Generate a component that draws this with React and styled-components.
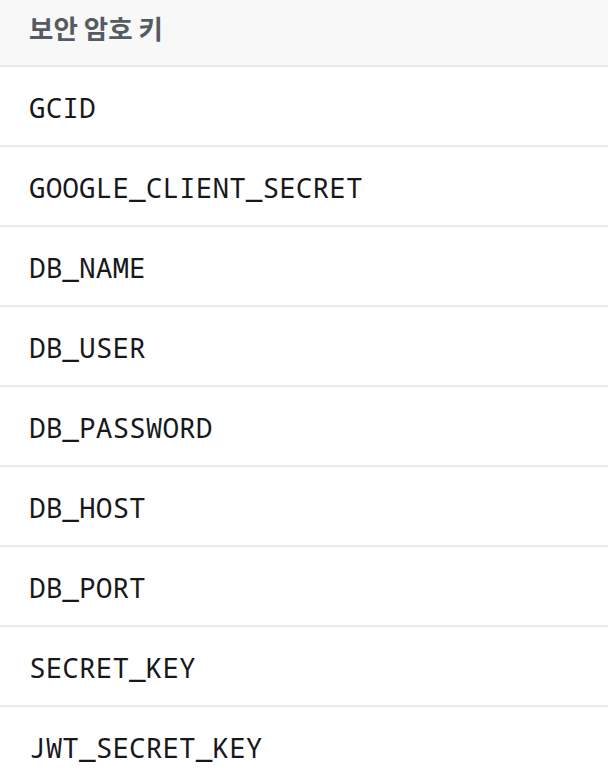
import React from "react";
import styled, { createGlobalStyle } from "styled-components";

const Global = createGlobalStyle`
  html, body { margin: 0; padding: 0; background: #ffffff; }
  body { font-family: "Noto Sans CJK KR", "Noto Sans", sans-serif; }
`;

const Table = styled.div`
  display: flex;
  flex-direction: column;
  width: 608px;
`;

const Header = styled.div`
  height: 67px;
  box-sizing: border-box;
  display: flex;
  align-items: center;
  padding: 0 0 11px 29px;
  background: #f8f8f8;
  border-bottom: 2px solid #e9e9e9;
  color: #555b62;
  font-family: "Noto Sans CJK KR", sans-serif;
  font-weight: 700;
  font-size: 26.5px;
`;

const Row = styled.div`
  height: 80px;
  box-sizing: border-box;
  display: flex;
  align-items: center;
  padding: 2px 0 0 29px;
  border-bottom: 2px solid #e9e9e9;
  color: #17181c;
  font-family: "Noto Sans Mono", "DejaVu Sans Mono", monospace;
  font-size: 27.8px;
`;

const keys = [
  "GCID",
  "GOOGLE_CLIENT_SECRET",
  "DB_NAME",
  "DB_USER",
  "DB_PASSWORD",
  "DB_HOST",
  "DB_PORT",
  "SECRET_KEY",
  "JWT_SECRET_KEY",
];

export default function App() {
  return (
    <>
      <Global />
      <Table>
        <Header>보안 암호 키</Header>
        {keys.map((k) => (
          <Row key={k}>{k}</Row>
        ))}
      </Table>
    </>
  );
}
